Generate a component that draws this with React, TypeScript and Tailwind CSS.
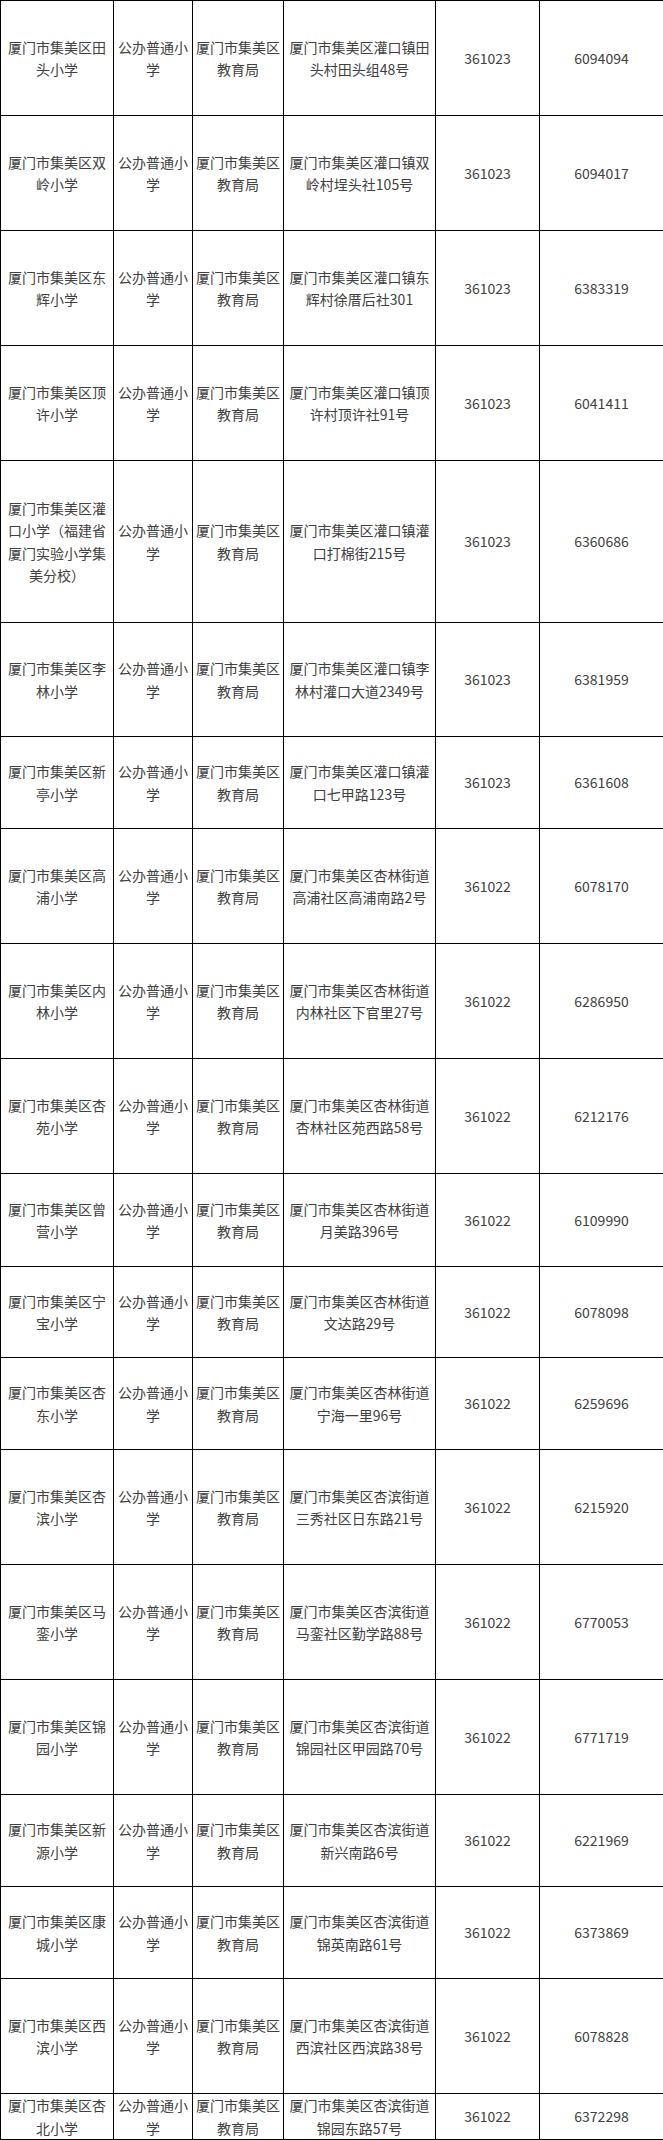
const rows: [string, string, string, string, number][] = [
  ["厦门市集美区田头小学", "厦门市集美区灌口镇田头村田头组48号", "361023", "6094094", 115],
  ["厦门市集美区双岭小学", "厦门市集美区灌口镇双岭村埕头社105号", "361023", "6094017", 115],
  ["厦门市集美区东辉小学", "厦门市集美区灌口镇东辉村徐厝后社301", "361023", "6383319", 115],
  ["厦门市集美区顶许小学", "厦门市集美区灌口镇顶许村顶许社91号", "361023", "6041411", 115],
  ["厦门市集美区灌口小学（福建省厦门实验小学集美分校）", "厦门市集美区灌口镇灌口打棉街215号", "361023", "6360686", 162],
  ["厦门市集美区李林小学", "厦门市集美区灌口镇李林村灌口大道2349号", "361023", "6381959", 114],
  ["厦门市集美区新亭小学", "厦门市集美区灌口镇灌口七甲路123号", "361023", "6361608", 92],
  ["厦门市集美区高浦小学", "厦门市集美区杏林街道高浦社区高浦南路2号", "361022", "6078170", 115],
  ["厦门市集美区内林小学", "厦门市集美区杏林街道内林社区下官里27号", "361022", "6286950", 115],
  ["厦门市集美区杏苑小学", "厦门市集美区杏林街道杏林社区苑西路58号", "361022", "6212176", 115],
  ["厦门市集美区曾营小学", "厦门市集美区杏林街道月美路396号", "361022", "6109990", 93],
  ["厦门市集美区宁宝小学", "厦门市集美区杏林街道文达路29号", "361022", "6078098", 91],
  ["厦门市集美区杏东小学", "厦门市集美区杏林街道宁海一里96号", "361022", "6259696", 92],
  ["厦门市集美区杏滨小学", "厦门市集美区杏滨街道三秀社区日东路21号", "361022", "6215920", 115],
  ["厦门市集美区马銮小学", "厦门市集美区杏滨街道马銮社区勤学路88号", "361022", "6770053", 115],
  ["厦门市集美区锦园小学", "厦门市集美区杏滨街道锦园社区甲园路70号", "361022", "6771719", 115],
  ["厦门市集美区新源小学", "厦门市集美区杏滨街道新兴南路6号", "361022", "6221969", 92],
  ["厦门市集美区康城小学", "厦门市集美区杏滨街道锦英南路61号", "361022", "6373869", 92],
  ["厦门市集美区西滨小学", "厦门市集美区杏滨街道西滨社区西滨路38号", "361022", "6078828", 115],
  ["厦门市集美区杏北小学", "厦门市集美区杏滨街道锦园东路57号", "361022", "6372298", 46],
];

const cell = "border border-black px-[3px] py-0 text-center align-middle";

export default function App() {
  return (
    <div className="w-[663px] bg-white font-['Noto_Sans_CJK_SC',sans-serif] text-[14px] leading-[22.4px] text-[#404040]">
      <table className="w-[663px] table-fixed border-collapse">
        <colgroup>
          <col className="w-[113px]" />
          <col className="w-[79px]" />
          <col className="w-[91px]" />
          <col className="w-[152px]" />
          <col className="w-[104px]" />
          <col className="w-[124px]" />
        </colgroup>
        <tbody>
          {rows.map(([name, address, postcode, phone, height]) => (
            <tr key={name} style={{ height }}>
              <td className={cell}>{name}</td>
              <td className={cell}>公办普通小学</td>
              <td className={cell}>厦门市集美区教育局</td>
              <td className={cell}>{address}</td>
              <td className={cell}>{postcode}</td>
              <td className={cell}>{phone}</td>
            </tr>
          ))}
        </tbody>
      </table>
    </div>
  );
}
